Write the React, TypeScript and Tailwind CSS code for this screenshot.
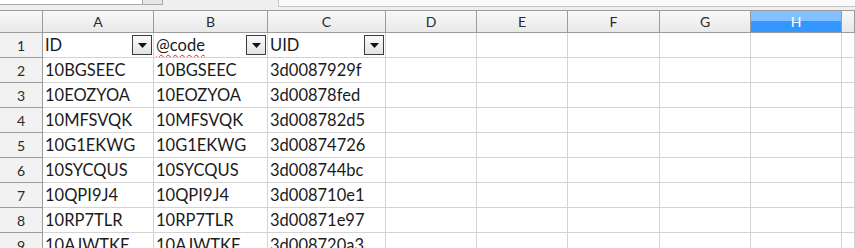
import React from 'react';

// column widths: row header, A..H, and the slice of I at the edge
const COLS = ['w-[43px]', 'w-[111px]', 'w-[114px]', 'w-[118px]', 'w-[91px]', 'w-[91px]', 'w-[92px]', 'w-[91px]', 'w-[91px]', 'w-[13px]'];
const LETTERS = ['', 'A', 'B', 'C', 'D', 'E', 'F', 'G', 'H', ''];

const ROWS: string[][] = [
  ['ID', '@code', 'UID'],
  ['10BGSEEC', '10BGSEEC', '3d0087929f'],
  ['10EOZYOA', '10EOZYOA', '3d00878fed'],
  ['10MFSVQK', '10MFSVQK', '3d008782d5'],
  ['10G1EKWG', '10G1EKWG', '3d00874726'],
  ['10SYCQUS', '10SYCQUS', '3d008744bc'],
  ['10QPI9J4', '10QPI9J4', '3d008710e1'],
  ['10RP7TLR', '10RP7TLR', '3d00871e97'],
  ['10AJWTKF', '10AJWTKF', '3d008720a3'],
];

const FilterButton = () => (
  <div className="w-[20px] h-[20px] shrink-0 mr-[1px] border border-[#3c3c3c] bg-gradient-to-b from-[#fafafa] to-[#e4e4e4] flex items-center justify-center">
    <svg width="9" height="5" viewBox="0 0 9 5">
      <path d="M0 0 H9 L4.5 5 Z" fill="#111" />
    </svg>
  </div>
);

export default function App() {
  return (
    <div className="w-[855px] h-[248px] overflow-hidden bg-white font-['Lato','Open_Sans',sans-serif] text-[#1b1b1b]">
      {/* toolbar remnant: name box + formula bar edge */}
      <div className="h-[10px] flex bg-[#efefef]">
        <div className="w-[143px] h-[5px] bg-white border-b border-r border-[#a9a9a9]" />
        <div className="w-[20px] h-[5px] bg-[#e6e6e6] border-b border-r border-[#a9a9a9]" />
        <div className="w-[115px]" />
        <div className="flex-1 h-[7px] bg-[#fafafa] border-l border-b border-[#c4c4c4]" />
      </div>

      {/* column headers */}
      <div className="flex h-[23px] border-t border-[#9b9b9b]">
        {COLS.map((w, i) => (
          <div
            key={i}
            className={`${w} shrink-0 h-full border-r border-b border-[#9b9b9b] flex items-center justify-center text-[14px] ${
              i === 8
                ? 'bg-gradient-to-b from-[#82c0ff] from-50% to-[#3496ff] to-50% text-white'
                : 'bg-gradient-to-b from-[#f8f8f8] to-[#e9e9e9] text-[#2a2a2a]'
            }`}
          >
            {LETTERS[i]}
          </div>
        ))}
      </div>

      {/* rows */}
      {ROWS.map((row, r) => (
        <div key={r} className="flex h-[25px]">
          {COLS.map((w, i) => {
            if (i === 0) {
              return (
                <div
                  key={i}
                  className={`${w} shrink-0 h-full bg-[#f2f2f2] border-r border-b border-[#9b9b9b] flex items-center justify-center text-[14px] text-[#2a2a2a]`}
                >
                  {r + 1}
                </div>
              );
            }
            const text = i <= 3 ? row[i - 1] : '';
            return (
              <div
                key={i}
                className={`${w} shrink-0 h-full border-r border-b border-[#d3d3d3] flex items-center justify-between pl-[2px] text-[16.5px] leading-none whitespace-nowrap overflow-hidden`}
              >
                {text === '@code' ? (
                  <span className="underline decoration-wavy decoration-[#e02020] decoration-1 underline-offset-[3px]">{text}</span>
                ) : (
                  <span>{text}</span>
                )}
                {r === 0 && i <= 3 && <FilterButton />}
              </div>
            );
          })}
        </div>
      ))}
    </div>
  );
}
